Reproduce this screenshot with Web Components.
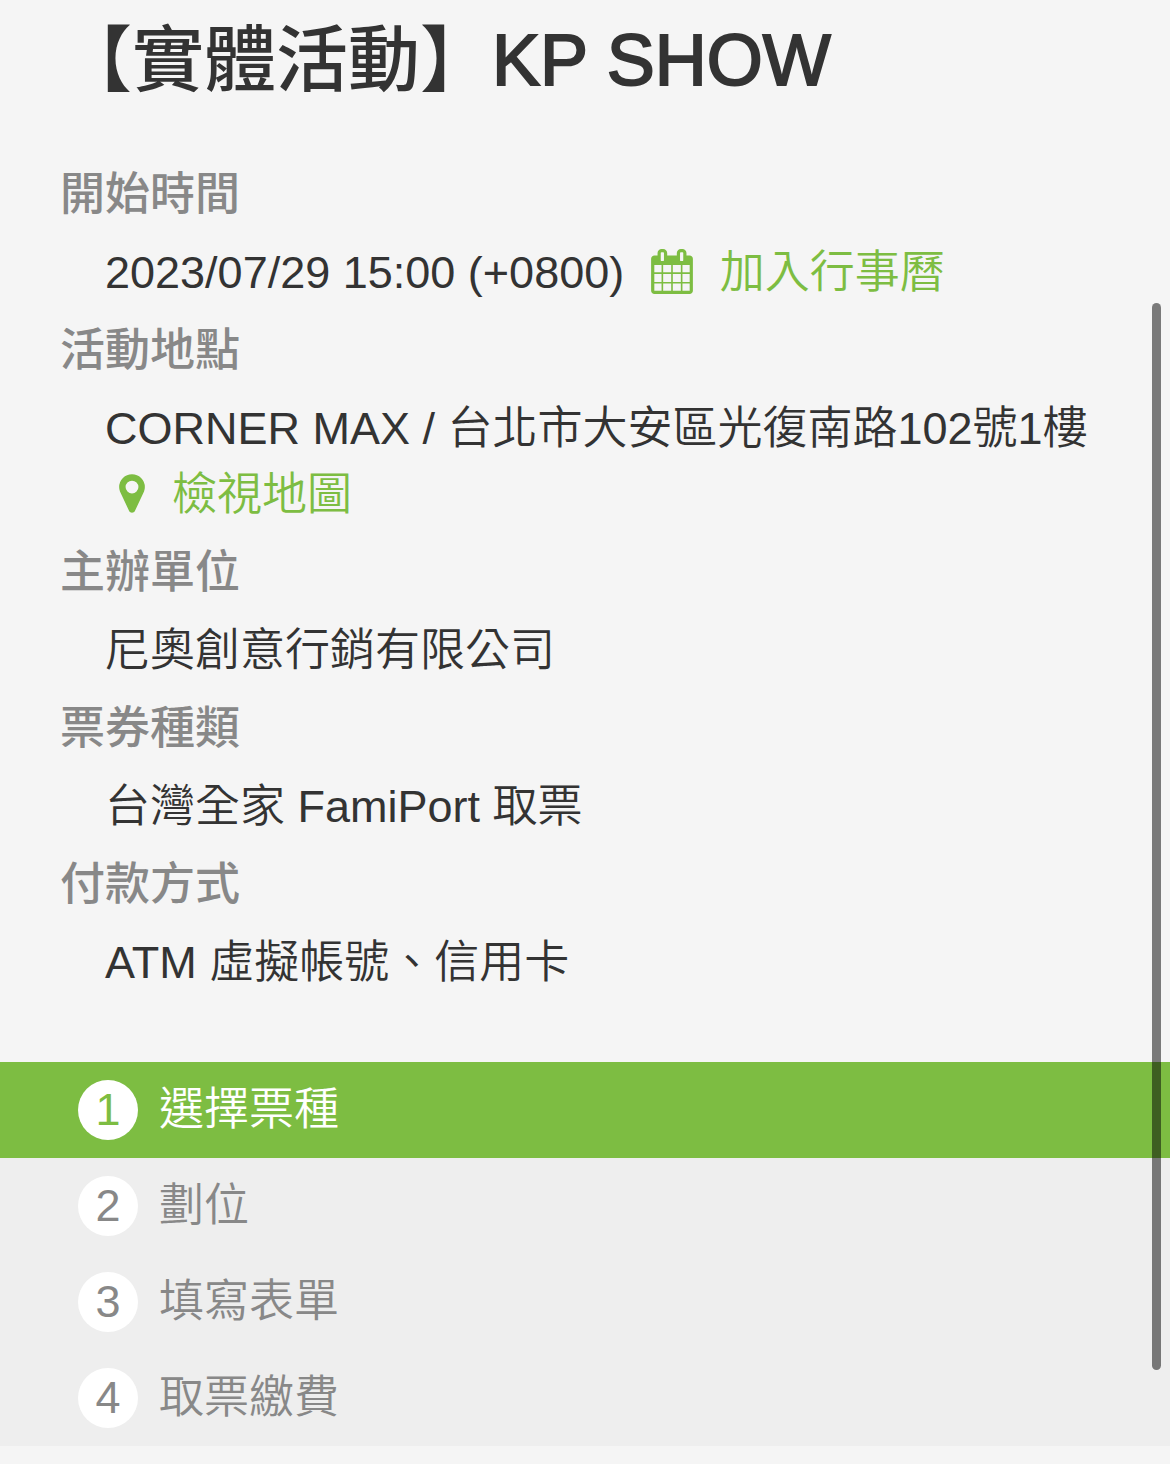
<!DOCTYPE html>
<html lang="zh-Hant">
<head>
<meta charset="utf-8">
<meta name="viewport" content="width=device-width, initial-scale=1">
<title>KP SHOW</title>
<style>
  body {
    margin: 0;
    background: #f5f5f5;
    color: #333;
    --accent: #7dbd42;
    --muted: #888;
    font: 350 45px/66px "Liberation Sans", "Noto Sans CJK TC", sans-serif;
  }
</style>
</head>
<body>
<event-page>
  <event-title slot="title">【實體活動】<latin-text>KP SHOW</latin-text></event-title>
  <event-field label="開始時間">2023/07/29 15:00 (+0800) <icon-link icon="calendar" href="#calendar">加入行事曆</icon-link></event-field>
  <event-field label="活動地點">CORNER MAX / 台北市大安區光復南路102號1樓 <icon-link icon="marker" href="#map">檢視地圖</icon-link></event-field>
  <event-field label="主辦單位">尼奧創意行銷有限公司</event-field>
  <event-field label="票券種類">台灣全家 FamiPort 取票</event-field>
  <event-field label="付款方式">ATM 虛擬帳號、信用卡</event-field>
  <step-list slot="steps">
    <step-item number="1" active>選擇票種</step-item>
    <step-item number="2">劃位</step-item>
    <step-item number="3">填寫表單</step-item>
    <step-item number="4">取票繳費</step-item>
  </step-list>
</event-page>
<scroll-thumb></scroll-thumb>

<script>
  class BaseElement extends HTMLElement {
    constructor() {
      super();
      this.attachShadow({ mode: "open" });
    }
    connectedCallback() {
      this.shadowRoot.innerHTML = this.render().trim();
    }
  }

  customElements.define("event-page", class extends BaseElement {
    render() {
      return `
        <style>
          :host { display: block; }
          header { padding: 15px 60px 57px; }
          section { display: flex; flex-direction: column; gap: 12px; padding: 0 60px 66px; }
        </style>
        <main>
          <header><slot name="title"></slot></header>
          <section><slot></slot></section>
          <slot name="steps"></slot>
        </main>`;
    }
  });

  customElements.define("event-title", class extends BaseElement {
    render() {
      return `
        <style>
          :host { display: block; }
          h1 { margin: 0; font-size: 72px; line-height: 90px; font-weight: 500; }
        </style>
        <h1><slot></slot></h1>`;
    }
  });

  // Liberation Sans has no medium weight, so a thin outline thickens the regular one.
  customElements.define("latin-text", class extends BaseElement {
    render() {
      return `<style>:host { display: inline; -webkit-text-stroke: 2px currentColor; }</style><slot></slot>`;
    }
  });

  customElements.define("event-field", class extends BaseElement {
    render() {
      return `
        <style>
          :host { display: flex; flex-direction: column; gap: 12px; }
          h2 { margin: 0; font-size: inherit; line-height: inherit; font-weight: 500; color: var(--muted); }
          div { margin-left: 45px; }
        </style>
        <h2>${this.getAttribute("label")}</h2>
        <div><slot></slot></div>`;
    }
  });

  const icons = {
    calendar: {
      width: 42, box: "0 0 1664 1792",
      path: "M128 1664h288v-288h-288v288zm352 0h320v-288h-320v288zm-352-352h288v-320h-288v320zm352 0h320v-320h-320v320zm-352-384h288v-288h-288v288zm736 736h320v-288h-320v288zm-384-736h320v-288h-320v288zm768 736h288v-288h-288v288zm-384-352h320v-320h-320v320zm-352-864v-288q0-13-9.5-22.5t-22.5-9.5h-64q-13 0-22.5 9.5t-9.5 22.5v288q0 13 9.5 22.5t22.5 9.5h64q13 0 22.5-9.5t9.5-22.5zm736 864h288v-320h-288v320zm-384-384h320v-288h-320v288zm384 0h288v-288h-288v288zm32-480v-288q0-13-9.5-22.5t-22.5-9.5h-64q-13 0-22.5 9.5t-9.5 22.5v288q0 13 9.5 22.5t22.5 9.5h64q13 0 22.5-9.5t9.5-22.5zm384-64v1280q0 52-38 90t-90 38h-1408q-52 0-90-38t-38-90v-1280q0-52 38-90t90-38h128v-96q0-66 47-113t113-47h64q66 0 113 47t47 113v96h384v-96q0-66 47-113t113-47h64q66 0 113 47t47 113v96h128q52 0 90 38t38 90z"
    },
    marker: {
      width: 26, box: "0 0 1024 1792",
      path: "M768 640q0-106-75-181t-181-75-181 75-75 181 75 181 181 75 181-75 75-181zm256 0q0 109-33 179l-364 774q-16 33-47.5 52t-67.5 19-67.5-19-46.5-52l-365-774q-33-70-33-179 0-212 150-362t362-150 362 150 150 362z"
    }
  };

  customElements.define("icon-link", class extends BaseElement {
    render() {
      const icon = icons[this.getAttribute("icon")];
      return `
        <style>
          :host { display: inline; white-space: nowrap; }
          a { color: var(--accent); text-decoration: none; }
          svg { height: 45px; margin: 0 27px 0 14px; vertical-align: -6px; fill: currentColor; }
        </style>
        <a href="${this.getAttribute("href")}"><svg width="${icon.width}" viewBox="${icon.box}" aria-hidden="true"><path d="${icon.path}"/></svg><slot></slot></a>`;
    }
  });

  customElements.define("step-list", class extends BaseElement {
    render() {
      return `
        <style>:host { display: block; background: #eee; margin-bottom: 18px; }</style>
        <div role="list"><slot></slot></div>`;
    }
  });

  customElements.define("step-item", class extends BaseElement {
    render() {
      return `
        <style>
          :host { display: block; color: var(--muted); }
          :host([active]) { background: var(--accent); color: #fff; }
          div { display: flex; align-items: center; gap: 21px; padding: 15px 78px; }
          .number { flex: none; width: 60px; line-height: 60px; border-radius: 50%; background: #fff; text-align: center; color: var(--muted); }
          :host([active]) .number { color: var(--accent); }
        </style>
        <div role="listitem"><span class="number">${this.getAttribute("number")}</span><span><slot></slot></span></div>`;
    }
  });

  customElements.define("scroll-thumb", class extends BaseElement {
    render() {
      return `
        <style>
          :host { position: fixed; top: 303px; bottom: 94px; right: 9px; width: 9px; border-radius: 5px; background: rgba(0, 0, 0, .5); }
        </style>`;
    }
  });
</script>
</body>
</html>
